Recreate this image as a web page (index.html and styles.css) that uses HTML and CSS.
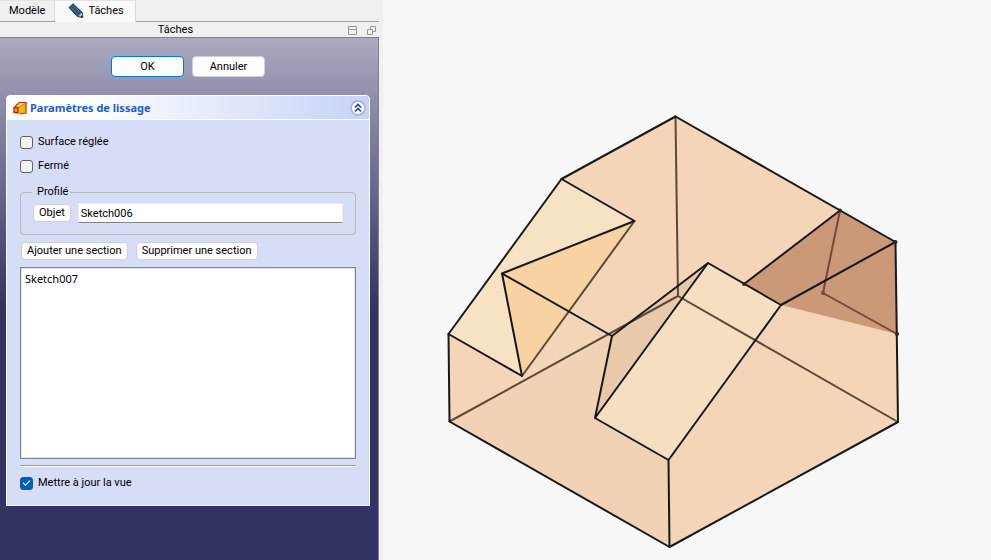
FILE: index.html
```html
<!DOCTYPE html>
<html lang="fr">
<head>
<meta charset="utf-8">
<title>Paramètres de lissage</title>
<link rel="stylesheet" href="styles.css">
</head>
<body>
<div class="app">
  <aside class="dock">
    <div class="tabs" role="tablist">
      <button class="tab" type="button" role="tab" aria-selected="false">Modèle</button>
      <button class="tab tab-active" type="button" role="tab" aria-selected="true">
        <svg class="pencil" viewBox="0 0 16 16" aria-hidden="true">
          <path d="M1 4.500 5 .8l9.300 8.700.5 5-5.500-1z" fill="#2c5275" stroke="#1c3a58" stroke-width="1"/>
          <path d="M2.800 4.200l8 8M5 2.300l8 7.700" stroke="#4d7aa3" stroke-width="1"/>
          <path d="M10.500 13l3.300-3.200.7 4.400z" fill="#c9d0d6"/>
          <path d="M12.300 13.900l2-2 .5 2.600z" fill="#17202a"/>
        </svg>
        Tâches
      </button>
    </div>
    <header class="dock-title">
      <h1>Tâches</h1>
      <div class="dock-tools">
        <button type="button" class="tool" aria-label="Réduire">
          <svg viewBox="0 0 9 9"><path d="M.5 .5h8v8h-8zM.5 3.500h8"/></svg>
        </button>
        <button type="button" class="tool" aria-label="Détacher">
          <svg viewBox="0 0 9 9"><path d="M3.500 3V.5h5v5H6M.5 3.500h5v5h-5z"/></svg>
        </button>
      </div>
    </header>
    <main class="tasks">
      <div class="actions">
        <button type="button" class="btn btn-wide btn-default">OK</button>
        <button type="button" class="btn btn-wide">Annuler</button>
      </div>
      <section class="panel">
        <header class="panel-head">
          <svg class="loft" viewBox="0 0 14 14" aria-hidden="true">
            <path d="M1.500 5.500 6 1.500l7-.5v10.500l-7 1.500H2z" fill="#f0cc12"/>
            <path d="M2 5.500 6.500 1.500 12 2 6.500 6z" fill="#fbe84a"/>
            <path d="M6.500 6.500 12 3v8l-5.500 1.500z" fill="#e3bd12"/>
            <path d="M5.500 6.500 12 2.500" fill="none" stroke="#8b6a08" stroke-width=".7"/>
            <path d="M2 5.500 6.500 1.500H13V12l-6 1" fill="none" stroke="#cf2015" stroke-width="1.200"/>
            <path d="M1 6.500h4v5H1z" fill="#f0a414" stroke="#cf2015" stroke-width="1.400"/>
          </svg>
          <h2>Paramètres de lissage</h2>
          <button type="button" class="collapse" aria-label="Replier">
            <svg viewBox="0 0 16 16">
              <circle cx="8" cy="8" r="7" fill="#fff" stroke="#b0b9dd" stroke-width="2"/>
              <path d="M5 7.500l3-3 3 3M5 11.500l3-3 3 3" fill="none" stroke="#1746a8" stroke-width="1.700"/>
            </svg>
          </button>
        </header>
        <form class="panel-body">
          <label class="check"><input type="checkbox">Surface réglée</label>
          <label class="check"><input type="checkbox">Fermé</label>
          <fieldset class="profile">
            <legend>Profilé</legend>
            <div class="profile-row">
              <button type="button" class="btn">Objet</button>
              <input class="field" type="text" value="Sketch006" aria-label="Profilé">
            </div>
          </fieldset>
          <div class="section-buttons">
            <button type="button" class="btn">Ajouter une section</button>
            <button type="button" class="btn">Supprimer une section</button>
          </div>
          <select class="sections" size="10" aria-label="Sections">
            <option>Sketch007</option>
          </select>
          <hr>
          <label class="check"><input type="checkbox" checked>Mettre à jour la vue</label>
        </form>
      </section>
    </main>
  </aside>
  <section class="view" aria-label="Vue 3D">
    <svg class="model" viewBox="383 0 608 560" preserveAspectRatio="xMidYMid meet">
      <path fill="#f4d5b7" d="M675.500 116.500 840 210.500 895.500 242 898 422 669.500 547 449.500 421.500 448.500 334 561.500 179z"/>
      <path fill="#f2d2b4" d="M449.500 421.500 612 336 595 418 668.500 460 669.500 547z"/>
      <path fill="#f8e2c4" d="M561.500 179 634.500 221 522 376 448.500 334z"/>
      <path fill="#f7d2a3" d="M502 273.500 634.500 221 522 376z"/>
      <path fill="#e8caab" d="M612 336 708 263 595 418z"/>
      <path fill="#f6dfc1" d="M708 263 781 305 668.500 460 595 418z"/>
      <path fill="#cb9878" d="M744 284 840 210.500 895.500 242 897 334 781 305z"/>
      <path class="edge edge-hidden" d="M675.500 116.500 678 296 449.500 421.500M678 296 898 422M634.500 221 522 376"/>
      <path class="edge edge-sketch" d="M840 210.500 823 293 897 334"/>
      <g class="edge">
        <path d="M675.500 116.500 895.500 242 898 422 669.500 547 449.500 421.500 448.500 334 561.500 179z"/>
        <path d="M561.500 179 634.500 221 502 273.500 522 376 448.500 334M502 273.500 612 336"/>
        <path d="M612 336 708 263 595 418zM708 263 781 305 668.500 460 595 418M668.500 460 669.500 547"/>
        <path d="M744 284 840 210.500M781 305 895.500 242"/>
      </g>
      <g fill="#2c2426">
        <circle cx="840" cy="210.500" r="2"/><circle cx="895.500" cy="242" r="2"/>
        <circle cx="897" cy="334" r="2"/><circle cx="744" cy="284" r="2"/>
      </g>
      <circle cx="823" cy="293" r="2" fill="#7b4638"/>
    </svg>
  </section>
</div>
</body>
</html>
```
FILE: styles.css
```css
* { box-sizing: border-box; }

body {
  margin: 0;
  background: #f7f7f7;
  color: #000;
  font: 11px/16px Roboto, "Noto Sans", sans-serif;
}

button, input, select {
  margin: 0;
  font: inherit;
  color: inherit;
}

h1, h2 { margin: 0; font-size: 11px; line-height: 16px; }
h1 { font-weight: 400; }
svg { display: block; }

.app {
  display: grid;
  grid-template-columns: 383px 1fr;
  min-height: 100vh;
}

.dock {
  display: flex;
  flex-direction: column;
  padding-right: 4px;
  background: #f0f0f0;
}

.tabs {
  display: flex;
  height: 22px;
  border-bottom: 1px solid #a0a0a0;
}

.tab {
  display: flex;
  align-items: center;
  gap: 4px;
  padding: 0 9px;
  border: 0;
  border-top: 1px solid #e4e4e4;
  border-right: 1px solid #d9d9d9;
  background: #f0f0f0;
}

.tab-active {
  height: 22px;
  padding: 0 11px 2px 13px;
  background: #f9f9f9;
}

.pencil { width: 16px; height: 16px; }

.dock-title {
  display: grid;
  grid-template-columns: 1fr auto 1fr;
  align-items: center;
  height: 15px;
  padding: 0 3px;
}

.dock-title h1 { grid-column: 2; padding-right: 28px; }

.dock-tools {
  display: flex;
  justify-content: flex-end;
  gap: 10px;
}

.tool { width: 9px; height: 9px; padding: 0; border: 0; background: none; }
.tool svg { width: 9px; height: 9px; fill: none; stroke: #969696; }

.tasks {
  flex: 1;
  padding: 18px 8px 8px 6px;
  border-top: 1px solid #82828c;
  border-right: 1px solid #82828c;
  background: #333363 linear-gradient(#ababc0 0, #9290ae 55px, #333363 270px) no-repeat;
}

.actions {
  display: flex;
  justify-content: center;
  gap: 8px;
  margin-bottom: 18px;
}

.btn {
  height: 18px;
  padding: 0 5px;
  border: 1px solid #d0d0d0;
  border-radius: 4px;
  background: #fdfdfd;
  line-height: 16px;
  white-space: nowrap;
}

.btn-wide { width: 73px; height: 21px; }
.btn-default { border-color: #0078d4; }

.panel {
  border: 1px solid #fff;
  border-radius: 4px 4px 0 0;
  background: #d6ddf7;
}

.panel-head {
  display: flex;
  align-items: center;
  gap: 3px;
  height: 24px;
  padding: 0 3px 0 6px;
  border-bottom: 1px solid #fff;
  border-radius: 3px 3px 0 0;
  background: linear-gradient(90deg, #fff 20%, #c6d3f7);
}

.panel-head h2 { flex: 1; color: #215dc6; font-family: "Noto Sans", sans-serif; }
.loft { width: 14px; height: 14px; }

.collapse { width: 16px; height: 16px; padding: 0; border: 0; background: none; }

.panel-body {
  display: flex;
  flex-direction: column;
  padding: 14px 13px 6px;
}

.check {
  display: flex;
  align-items: center;
  gap: 5px;
  height: 16px;
  margin-bottom: 8px;
}

.check input {
  display: grid;
  place-items: center;
  width: 13px;
  height: 13px;
  appearance: none;
  border: 1px solid #626262;
  border-radius: 3px;
  background: #f3f3f3;
}

.check input:checked { border-color: #005fb8; background: #005fb8; }

.check input:checked::after {
  content: "";
  width: 6px;
  height: 3px;
  margin-bottom: 2px;
  border: solid #fff;
  border-width: 0 0 1px 1px;
  transform: rotate(-45deg);
}

.profile {
  min-width: 0;
  height: 51px;
  margin: 2px 0 7px;
  padding: 3px 12px;
  border: 1px solid #bababa;
  border-radius: 4px;
}

.profile legend { margin-left: -1px; padding: 0 2px 0 5px; line-height: 16px; }

.profile-row { display: flex; align-items: center; gap: 7px; }

.field {
  flex: 1;
  min-width: 0;
  height: 20px;
  padding: 0 2px;
  border: 1px solid #ececec;
  border-bottom-color: #868686;
  background: #fff;
}

.section-buttons { display: flex; gap: 8px; margin: 0 1px 7px; }

.sections {
  height: 192px;
  padding: 3px 2px;
  border: 1px solid #828790;
  border-radius: 0;
  background: #fff;
  box-shadow: inset 0 0 0 1px #dbe3f3;
  font-family: "Noto Sans", sans-serif;
}

.sections option { padding: 0 2px; }

hr {
  width: 100%;
  margin: 6px 0 8px;
  border: 0;
  border-top: 1px solid #a0a0a0;
  border-bottom: 1px solid #fff;
}

.view { display: flex; min-width: 0; background: #f7f7f7; }
.model { width: 100%; }

.edge { fill: none; stroke: #17181a; stroke-width: 2; stroke-linecap: round; stroke-linejoin: round; }
.edge-hidden { stroke: #5b4935; }
.edge-sketch { stroke: #7b4638; }
```
